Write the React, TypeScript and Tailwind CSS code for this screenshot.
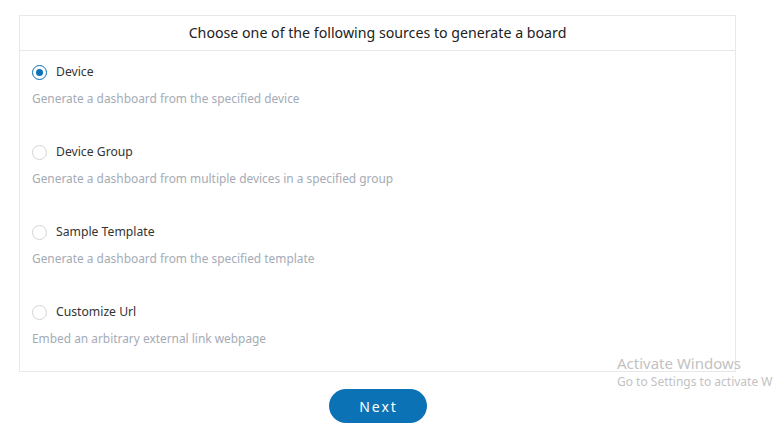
import React, { useState } from "react";

const options = [
  { label: "Device", desc: "Generate a dashboard from the specified device" },
  { label: "Device Group", desc: "Generate a dashboard from multiple devices in a specified group" },
  { label: "Sample Template", desc: "Generate a dashboard from the specified template" },
  { label: "Customize Url", desc: "Embed an arbitrary external link webpage" },
];

export default function App() {
  const [sel, setSel] = useState(0);
  return (
    <div
      className="relative w-[773px] h-[442px] bg-white overflow-hidden"
      style={{ fontFamily: '"Noto Sans", "Open Sans", sans-serif' }}
    >
      <div className="pt-[15px] pl-[19px] w-[736px]">
        <div className="w-[717px] h-[357px] border border-[#e8e8e8] flex flex-col">
          <div className="h-[35px] shrink-0 border-b border-[#e8e8e8] flex items-center justify-center text-[14.2px] text-[#222]">
            Choose one of the following sources to generate a board
          </div>
          <div className="flex flex-col gap-[42px] pl-[12px] pt-[13px]">
            {options.map((o, i) => (
              <div key={o.label} className="flex flex-col cursor-pointer shrink-0" onClick={() => setSel(i)}>
                <div className="flex items-center h-[16px]">
                  {sel === i ? (
                    <span className="w-[15px] h-[15px] rounded-full border-[1.5px] border-[#0b72b5] flex items-center justify-center">
                      <span className="w-[7px] h-[7px] rounded-full bg-[#0b72b5]" />
                    </span>
                  ) : (
                    <span className="w-[15px] h-[15px] rounded-full border border-[#d4d4d4]" />
                  )}
                  <span className="ml-[9px] text-[12.2px] text-[#333] leading-none">{o.label}</span>
                </div>
                <div className="mt-[14px] h-[8px] text-[11.9px] text-[#a4abb6] leading-[8px]">{o.desc}</div>
              </div>
            ))}
          </div>
        </div>
        <div className="flex justify-center pt-[17px]">
          <button className="w-[98px] h-[34px] rounded-full bg-[#0b72b5] text-white text-[14px] tracking-[2px] pl-[2px]">
            Next
          </button>
        </div>
      </div>
      <div className="absolute left-[617px] top-[353px] pointer-events-none whitespace-nowrap text-[#c2c2c2]">
        <div className="text-[15px] leading-[20px]">Activate Windows</div>
        <div className="text-[12px] leading-[16px] mt-[1px]">Go to Settings to activate Windows.</div>
      </div>
    </div>
  );
}
